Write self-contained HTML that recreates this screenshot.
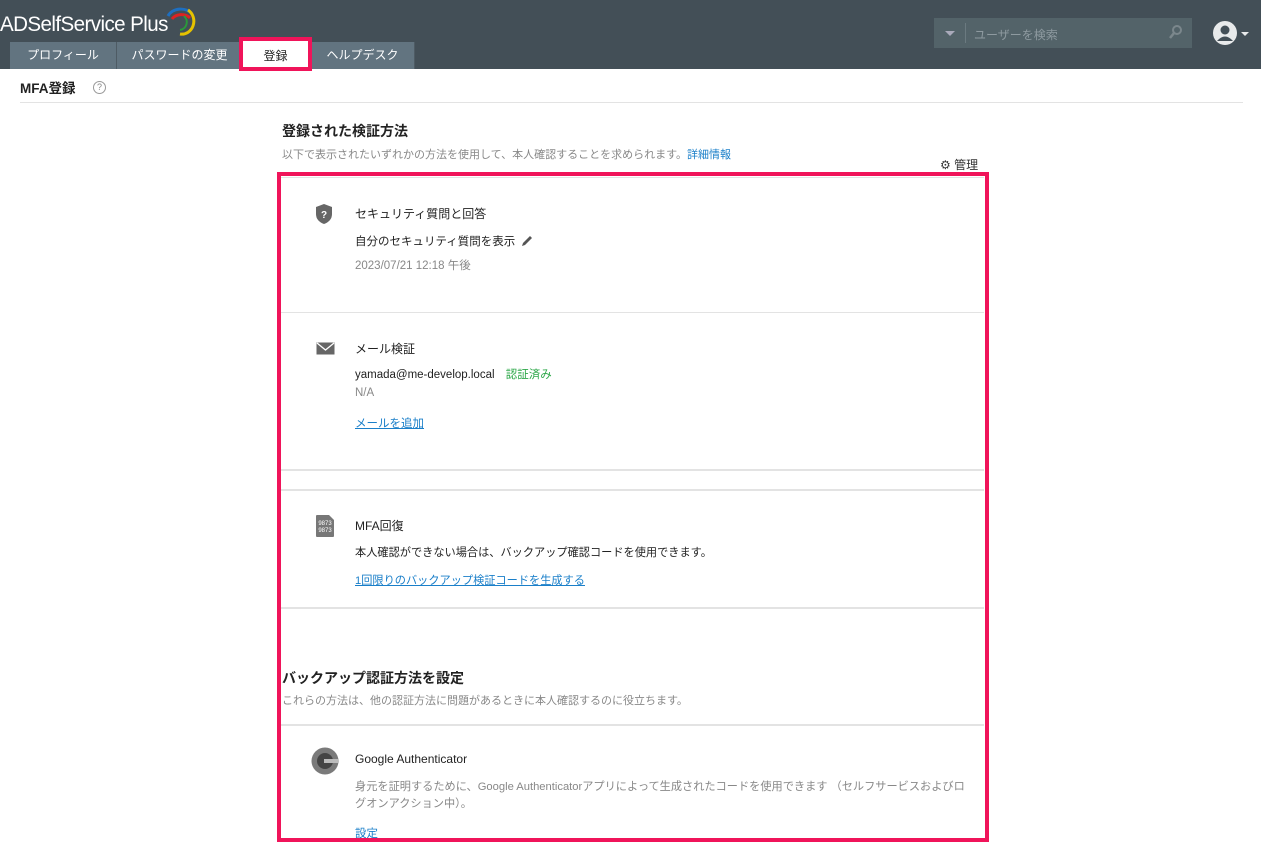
<!DOCTYPE html><html><head><meta charset="utf-8"><style>
*{margin:0;padding:0;box-sizing:border-box}
body{width:1261px;height:843px;overflow:hidden;background:#fff;font-family:"Liberation Sans","Noto Sans CJK JP",sans-serif;font-size:12px;color:#222;position:relative}
.a{position:absolute}
.hdr{left:0;top:0;width:1261px;height:69px;background:#434f57}
.tab{top:42px;height:27px;background:#627480;color:#fff;font-size:12px;text-align:center;line-height:27px;border-right:1px solid #4e5b64}
.line{height:2px;background:#e3e3e3;left:281px;width:703px}
.t{font-size:12px;color:#222}
.g{color:#888;font-size:11.5px}
.lk{color:#1a7fc9;text-decoration:underline;font-size:11.5px}
</style></head><body>
<div class="a hdr"></div>
<div class="a" style="left:0;top:13px;font-size:21px;color:#fff;letter-spacing:-0.6px;transform:scaleX(0.98);transform-origin:left">ADSelfService Plus</div>
<svg class="a" style="left:158px;top:4px" width="40" height="32"><path d="M10 12 A14 12 0 0 1 34 10" stroke="#1e6fc0" stroke-width="3" fill="none"/><path d="M14 15 A11 9 0 0 1 32 14" stroke="#d22" stroke-width="3" fill="none"/><path d="M30 6 A12 13 0 0 1 22 30" stroke="#e6c200" stroke-width="3" fill="none"/><path d="M26 12 A8 8 0 0 1 22 26" stroke="#2a9a3a" stroke-width="2" fill="none"/></svg>
<div class="a tab" style="left:10px;width:107px">プロフィール</div>
<div class="a tab" style="left:117px;width:126px">パスワードの変更</div>
<div class="a tab" style="left:311px;width:104px">ヘルプデスク</div>
<div class="a" style="left:239px;top:37px;width:73px;height:34px;border:4px solid #f0145a;background:#fff;text-align:center;line-height:30px;font-size:12px">登録</div>
<div class="a" style="left:934px;top:18px;width:258px;height:30px;background:#536369"></div>
<div class="a" style="left:945px;top:31px;border-left:5px solid transparent;border-right:5px solid transparent;border-top:5px solid #aab"></div>
<div class="a" style="left:965px;top:23px;width:1px;height:20px;background:#6b7a80"></div>
<div class="a" style="left:974px;top:26px;color:#8e9aa0;font-size:12px">ユーザーを検索</div>
<svg class="a" style="left:1168px;top:24px" width="16" height="16"><circle cx="9" cy="6" r="4" stroke="#7b878c" stroke-width="2" fill="none"/><path d="M6 9 L2 14" stroke="#7b878c" stroke-width="2.5"/></svg>
<svg class="a" style="left:1212px;top:20px" width="40" height="26"><circle cx="13" cy="13" r="12" fill="#e8eaeb"/><circle cx="13" cy="10" r="4.5" fill="#434f57"/><path d="M5 21 Q13 12 21 21" fill="#434f57"/><path d="M29 12 L37 12 L33 16Z" fill="#e8eaeb"/></svg>
<div class="a" style="left:20px;top:77px;font-size:13.5px;font-weight:bold;color:#222">MFA登録</div>
<div class="a" style="left:93px;top:81px;width:13px;height:13px;border:1px solid #999;border-radius:50%;font-size:9px;color:#888;text-align:center;line-height:11px">?</div>
<div class="a" style="left:20px;top:102px;width:1223px;height:1px;background:#e3e3e3"></div>
<div class="a" style="left:282px;top:121px;font-size:14px;font-weight:bold">登録された検証方法</div>
<div class="a" style="left:282px;top:146px;font-size:11px;color:#888">以下で表示されたいずれかの方法を使用して、本人確認することを求められます。<span style="color:#1a7fc9">詳細情報</span></div>
<div class="a" style="left:940px;top:156px;font-size:12px;color:#333">⚙ 管理</div>
<div class="a line" style="top:177px;height:1px"></div>
<svg class="a" style="left:314px;top:203px" width="20" height="22"><path d="M10 1 L18 4 L18 11 Q18 18 10 21 Q2 18 2 11 L2 4Z" fill="#666"/><text x="10" y="15" font-size="10" font-weight="bold" fill="#fff" text-anchor="middle" font-family="Liberation Sans">?</text></svg>
<div class="a t" style="left:355px;top:205px">セキュリティ質問と回答</div>
<div class="a t" style="left:355px;top:233px;font-size:11.5px">自分のセキュリティ質問を表示</div>
<svg class="a" style="left:520px;top:234px" width="14" height="14"><path d="M2 12 L3 9 L10 2 L12 4 L5 11Z" fill="#555"/></svg>
<div class="a g" style="left:355px;top:257px">2023/07/21 12:18 午後</div>
<div class="a line" style="top:312px;height:1px"></div>
<svg class="a" style="left:316px;top:342px" width="20" height="14"><rect x="0.5" y="0.5" width="18" height="12" fill="#666"/><path d="M1 1 L9.5 8 L18 1" stroke="#fff" stroke-width="1.3" fill="none"/></svg>
<div class="a t" style="left:355px;top:340px">メール検証</div>
<div class="a" style="left:355px;top:366px;font-size:11.5px">yamada@me-develop.local <span style="color:#2ea84a;margin-left:8px">認証済み</span></div>
<div class="a g" style="left:355px;top:387px">N/A</div>
<div class="a lk" style="left:355px;top:415px">メールを追加</div>
<div class="a line" style="top:469px"></div>
<div class="a line" style="top:489px"></div>
<svg class="a" style="left:316px;top:515px" width="19" height="22"><path d="M0 1 Q0 0 1 0 L13 0 L18 5 L18 21 Q18 22 17 22 L1 22 Q0 22 0 21Z" fill="#777"/><text x="9" y="10" font-size="6" fill="#fff" text-anchor="middle" font-family="Liberation Sans">9873</text><text x="9" y="17" font-size="6" fill="#fff" text-anchor="middle" font-family="Liberation Sans">9873</text></svg>
<div class="a t" style="left:355px;top:517px">MFA回復</div>
<div class="a" style="left:355px;top:544px;font-size:11.2px">本人確認ができない場合は、バックアップ確認コードを使用できます。</div>
<div class="a lk" style="left:355px;top:572px;font-size:11.2px">1回限りのバックアップ検証コードを生成する</div>
<div class="a line" style="top:607px"></div>
<div class="a" style="left:282px;top:668px;font-size:14px;font-weight:bold">バックアップ認証方法を設定</div>
<div class="a" style="left:282px;top:692px;font-size:11px;color:#888">これらの方法は、他の認証方法に問題があるときに本人確認するのに役立ちます。</div>
<div class="a line" style="top:724px"></div>
<svg class="a" style="left:311px;top:747px" width="28" height="28"><circle cx="14" cy="14" r="13.5" fill="#7a7a7a"/><circle cx="14" cy="14" r="8" fill="#444"/><rect x="13" y="12" width="14" height="4" fill="#bbb"/></svg>
<div class="a t" style="left:355px;top:752px">Google Authenticator</div>
<div class="a g" style="left:355px;top:779px;width:612px;line-height:17px;font-size:11.2px">身元を証明するために、Google Authenticatorアプリによって生成されたコードを使用できます （セルフサービスおよびログオンアクション中）。</div>
<div class="a" style="left:355px;top:825px;font-size:11.5px;color:#1a7fc9">設定</div>
<div class="a" style="left:277px;top:172px;width:712px;height:670px;border:4px solid #f0145a"></div>
</body></html>
